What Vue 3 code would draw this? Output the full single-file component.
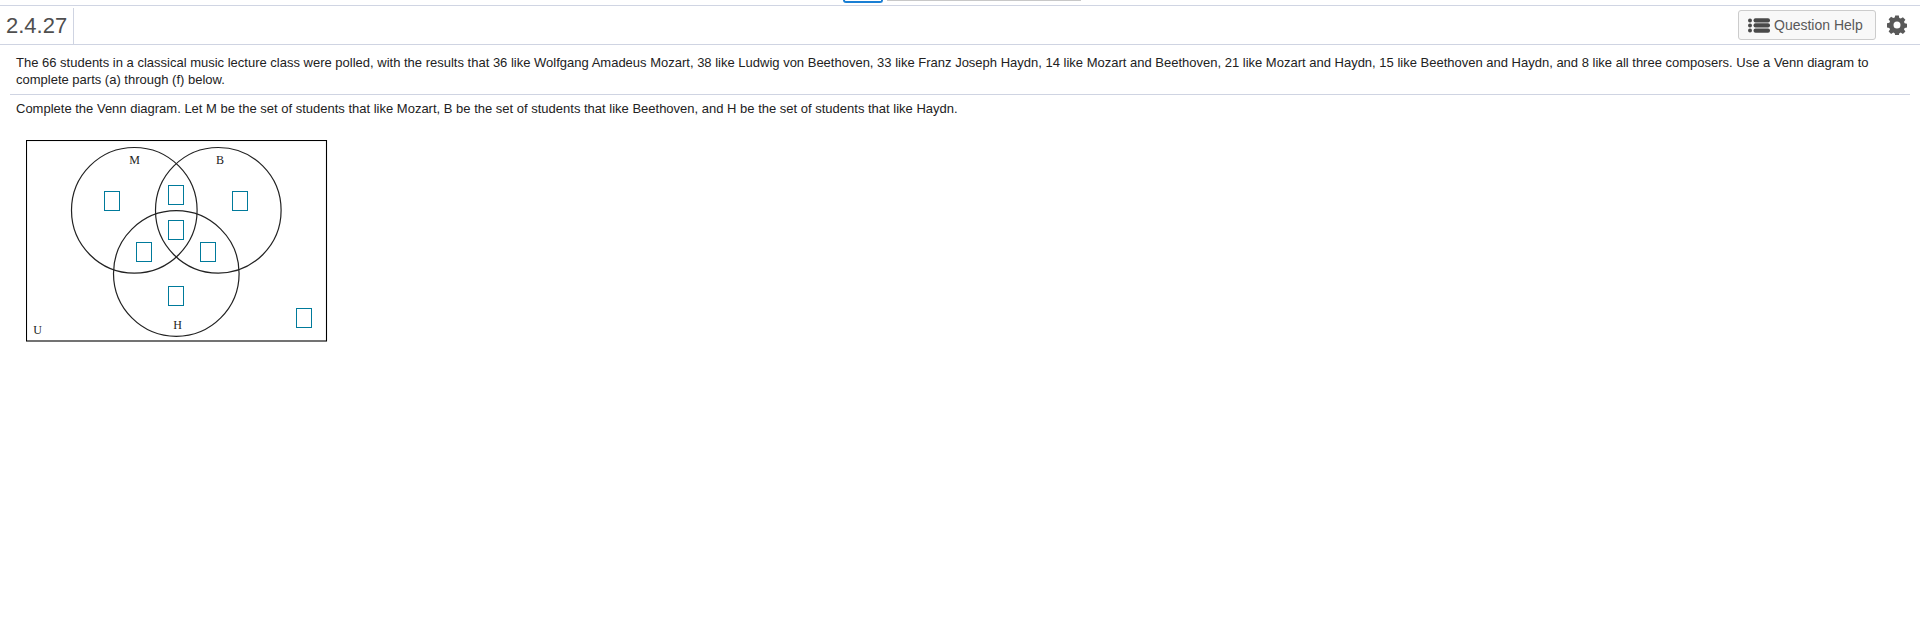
<template>
  <div class="page">
    <div class="tabs">
      <div class="tab-active"></div>
      <div class="tab-rest"></div>
    </div>
    <header class="head">
      <div class="num">2.4.27</div>
      <div class="spacer"></div>
      <button class="help">
        <svg class="list" width="22" height="15" viewBox="0 0 22 15">
          <circle cx="2" cy="2.5" r="2" /><circle cx="2" cy="7.5" r="2" /><circle cx="2" cy="12.5" r="2" />
          <rect x="5.5" y="0.2" width="16.500" height="4.300" rx="2" /><rect x="5.500" y="5.300" width="16.500" height="4.300" rx="2" /><rect x="5.500" y="10.400" width="16.500" height="4.300" rx="2" />
        </svg>
        <span>Question Help</span>
      </button>
      <svg class="gear" width="20" height="20" viewBox="0 0 20 20">
        <path fill-rule="evenodd" d="M8.2 0.5h3.6l.5 2.5 1.5.6 2.1-1.4 2.5 2.5-1.4 2.1.6 1.5 2.4.5v3.6l-2.4.5-.6 1.5 1.4 2.1-2.5 2.5-2.1-1.4-1.5.6-.5 2.4H8.2l-.5-2.4-1.5-.6-2.1 1.4-2.5-2.5 1.4-2.1-.6-1.5-2.4-.5V8.300l2.400-.5.6-1.5-1.4-2.1 2.500-2.500 2.100 1.400 1.500-.6zM10 6.500a3.500 3.500 0 1 0 0 7 3.500 3.500 0 0 0 0-7z" />
      </svg>
    </header>
    <main class="body">
      <p class="intro">The 66 students in a classical music lecture class were polled, with the results that 36 like Wolfgang Amadeus Mozart, 38 like Ludwig von Beethoven, 33 like Franz Joseph Haydn, 14 like Mozart and Beethoven, 21 like Mozart and Haydn, 15 like Beethoven and Haydn, and 8 like all three composers. Use a Venn diagram to complete parts (a) through (f) below.</p>
      <div class="rule"></div>
      <p class="task">Complete the Venn diagram. Let M be the set of students that like Mozart, B be the set of students that like Beethoven, and H be the set of students that like Haydn.</p>
      <svg class="venn" width="302" height="203" viewBox="0 0 302 203">
        <rect x="0.5" y="0.5" width="300" height="200.500" fill="none" stroke="#000" stroke-width="1.100" />
        <circle v-for="c in circles" :key="c.id" :cx="c.x" :cy="c.y" r="62.800" fill="none" stroke="#222" stroke-width="1.200" />
        <text v-for="l in labels" :key="l.t" :x="l.x" :y="l.y" class="lbl">{{ l.t }}</text>
        <rect v-for="(b, i) in boxes" :key="i" :x="b[0]" :y="b[1]" width="15" height="19" fill="none" stroke="#007a9b" stroke-width="1" />
      </svg>
    </main>
  </div>
</template>

<script setup>
const circles = [
  { id: 'm', x: 108.3, y: 70.3 },
  { id: 'b', x: 192.3, y: 70.3 },
  { id: 'h', x: 150.3, y: 133.5 }
]
const labels = [
  { t: 'M', x: 103.3, y: 24 },
  { t: 'B', x: 190, y: 24 },
  { t: 'H', x: 147.3, y: 189 },
  { t: 'U', x: 7.3, y: 194 }
]
const boxes = [
  [78.5, 51.5], [142.5, 45.5], [206.5, 51.5], [142.5, 80.5],
  [110.5, 102.5], [174.5, 102.5], [142.5, 146.5], [270.5, 168.5]
]
</script>

<style>
html, body { margin: 0; background: #fff; }
</style>

<style scoped>
.page {
  width: 1920px;
  height: 639px;
  overflow: hidden;
  background: #fff;
  font-family: "Liberation Sans", Arial, sans-serif;
  color: #222;
}
.tabs {
  display: flex;
  height: 5px;
  padding-left: 843px;
  gap: 4px;
  border-bottom: 1px solid #d0d5e3;
  box-sizing: content-box;
}
.tab-active {
  width: 36px;
  height: 1px;
  border: 2px solid #1a7fd4;
  border-top: 0;
  border-radius: 0 0 3px 3px;
}
.tab-rest {
  width: 194px;
  height: 1px;
  background: #c8c8c8;
}
.head {
  display: flex;
  align-items: center;
  height: 38px;
  border-bottom: 1px solid #cfd4e2;
}
.num {
  width: 67px;
  padding-left: 6px;
  height: 36px;
  line-height: 36px;
  font-size: 22px;
  color: #4f4f4f;
  border-right: 1px solid #cfd4e2;
  align-self: flex-end;
}
.spacer { flex: 1; }
.help {
  display: flex;
  align-items: center;
  gap: 4px;
  box-sizing: border-box;
  width: 138px;
  height: 30px;
  padding: 0 0 0 9px;
  margin-right: 11px;
  background: #f8f8f8;
  border: 1px solid #ccc;
  border-radius: 3px;
  font: 14px "Liberation Sans", Arial, sans-serif;
  color: #595959;
}
.list { fill: #4a4a4a; flex: none; }
.gear { fill: #595959; margin-right: 13px; flex: none; }
.body { padding: 0 10px; }
.intro {
  margin: 0;
  padding: 9px 6px 6px;
  font-size: 13px;
  line-height: 17px;
}
.rule { height: 1px; background: #cfd4e2; }
.task {
  margin: 0;
  padding: 5px 6px 0;
  font-size: 13px;
  line-height: 17px;
}
.venn {
  display: block;
  margin: 23px 0 0 16px;
}
.lbl {
  font: 12px "Liberation Serif", "Times New Roman", serif;
  fill: #222;
}
</style>
